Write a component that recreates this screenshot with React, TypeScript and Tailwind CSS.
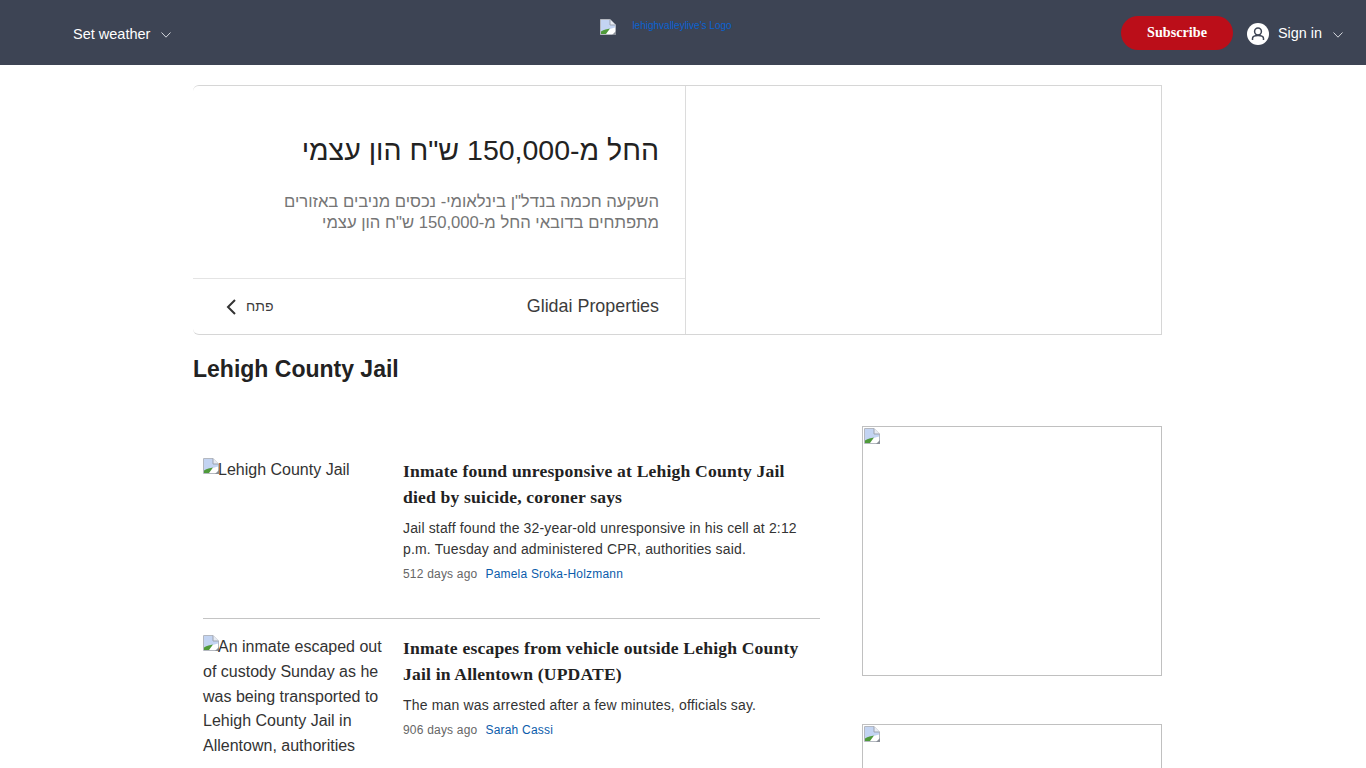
import React from 'react';

const sans = { fontFamily: '"Liberation Sans", Arial, sans-serif' };

// chrome's broken image placeholder
const BrokenImage = () => (
  <svg width="16" height="16" viewBox="0 0 16 16" className="inline-block shrink-0 align-top">
    <path d="M.5 .5H10L15.5 6V15.5H.5Z" fill="#fff" stroke="#b4b8c0" />
    <path d="M1 1H10V6H15V8.5L8 10.5L1 13.5Z" fill="#c3d4f2" />
    <path d="M10 .5V6H15.5" fill="#e8ecf4" stroke="#9ca3af" />
    <path d="M1 15V12.5C4 10.5 7 10 10 9.5L6 15Z" fill="#4f9a3a" />
    <path d="M9 15L15 9.5V11L11 15Z" fill="#ffffff" />
    <path d="M12 16L16 12V16Z" fill="#8a8f98" />
  </svg>
);

const Chevron = ({ className }: { className: string }) => (
  <svg viewBox="0 0 12 8" fill="none" stroke="currentColor" strokeWidth="1" className={className}>
    <path d="M1.5 1.5L6 6.2L10.5 1.5" />
  </svg>
);

const Header = () => (
  <header className="flex h-[65px] items-start bg-[#3d4454] text-white">
    <div className="ml-[73px] mt-[25px] flex items-center text-[14.5px] leading-[18px]" style={sans}>
      Set weather
      <Chevron className="ml-[10px] mt-[2px] h-2 w-3 text-[#d5d8de]" />
    </div>
    <div className="ml-[428px] mt-[19px] flex items-start">
      <BrokenImage />
      <span className="ml-4 text-[10px] leading-[14px] text-[#0b62d0]" style={sans}>lehighvalleylive's Logo</span>
    </div>
    <button className="ml-auto mt-4 h-[34px] w-28 rounded-full bg-[#bb0e19] text-[14.2px] font-bold text-white" style={{ fontFamily: '"Liberation Serif", serif' }}>
      Subscribe
    </button>
    <div className="ml-[14px] mr-[22px] mt-[20px] flex items-center text-[14.4px] leading-[22px]" style={sans}>
      <svg width="22" height="22" viewBox="0 0 22 22" className="mr-[9px] mt-[3px]">
        <circle cx="11" cy="11" r="11" fill="#fff" />
        <circle cx="11" cy="8.5" r="3.4" fill="none" stroke="#3d4454" strokeWidth="1.5" />
        <path d="M5.5 17V15.5C5.5 13.5 8 12.5 11 12.5S16.5 13.5 16.5 15.5V17" fill="none" stroke="#3d4454" strokeWidth="1.5" />
      </svg>
      Sign in
      <Chevron className="ml-[10px] mt-[4px] h-2 w-3 text-[#d5d8de]" />
    </div>
  </header>
);

const AdCard = () => (
  <div className="flex h-[250px] w-[969px] rounded-l-[6px] border border-l-0 border-[#d6d6d6]" style={sans}>
    <div className="flex w-[493px] flex-col border-r border-[#dcdcdc]" dir="rtl">
      <div className="flex h-[193px] flex-col border-b border-[#e4e4e4] pr-[26px]">
        <h2 className="mt-[47px] text-[28.5px] leading-[34px] text-[#222222]">החל מ-150,000 ש"ח הון עצמי</h2>
        <p className="mt-[24px] w-[400px] text-[16.65px] leading-[21px] text-[#757575]">
          השקעה חכמה בנדל"ן בינלאומי- נכסים מניבים באזורים מתפתחים בדובאי החל מ-150,000 ש"ח הון עצמי
        </p>
      </div>
      <div className="flex flex-1 items-center justify-between pl-[32px] pr-[26px]">
        <span className="text-[17.9px] text-[#3c3c3c]" dir="ltr">Glidai Properties</span>
        <span className="flex items-center text-[14px] text-[#3c3c3c]">
          פתח
          <svg width="12" height="18" viewBox="0 0 12 18" fill="none" stroke="#333333" strokeWidth="2" className="mr-[9px]">
            <path d="M10 2L3 9L10 16" />
          </svg>
        </span>
      </div>
    </div>
  </div>
);

type Article = {
  alt: string;
  title: string;
  desc: string;
  age: string;
  author: string;
};

const articles: Article[] = [
  {
    alt: 'Lehigh County Jail',
    title: 'Inmate found unresponsive at Lehigh County Jail died by suicide, coroner says',
    desc: 'Jail staff found the 32-year-old unresponsive in his cell at 2:12 p.m. Tuesday and administered CPR, authorities said.',
    age: '512 days ago',
    author: 'Pamela Sroka-Holzmann',
  },
  {
    alt: 'An inmate escaped out of custody Sunday as he was being transported to Lehigh County Jail in Allentown, authorities',
    title: 'Inmate escapes from vehicle outside Lehigh County Jail in Allentown (UPDATE)',
    desc: 'The man was arrested after a few minutes, officials say.',
    age: '906 days ago',
    author: 'Sarah Cassi',
  },
];

const ArticleRow = ({ item }: { item: Article }) => (
  <article className="flex h-[161px]">
    <div className="mt-[1px] w-[180px] shrink-0 text-base leading-[24.8px] text-[#333333]" style={sans}>
      <span className="-mr-[1px] inline-block align-top"><BrokenImage /></span>
      {item.alt}
    </div>
    <div className="ml-5 min-w-0 flex-1">
      <h3 className="mt-[1px] text-[17.6px] font-bold leading-[26px] tracking-[0.18px] text-[#222222]" style={{ fontFamily: '"Liberation Serif", serif' }}>
        {item.title}
      </h3>
      <p className="mt-[8px] text-sm leading-[21px] tracking-[0.16px] text-[#333333]" style={sans}>{item.desc}</p>
      <div className="mt-[5px] flex gap-2 text-xs leading-[18px] tracking-[0.2px]" style={sans}>
        <span className="text-[#666666]">{item.age}</span>
        <span className="text-[#0b5cab]">{item.author}</span>
      </div>
    </div>
  </article>
);

export default function App() {
  return (
    <div className="h-[768px] overflow-hidden bg-white">
      <Header />
      <main className="ml-[193px] w-[969px] pt-5">
        <AdCard />
        <h1 className="mt-[20px] text-[23px] font-bold leading-7 text-[#222222]" style={sans}>Lehigh County Jail</h1>
        <div className="mt-[43px] flex items-start">
          <div className="ml-[10px] mt-[31px] w-[617px]">
            <ArticleRow item={articles[0]} />
            <div className="border-t border-[#c4c4c4] pt-[15px]">
              <ArticleRow item={articles[1]} />
            </div>
          </div>
          <aside className="ml-[42px] flex w-[300px] flex-col gap-12">
            <div className="h-[250px] border border-[#c0c0c0] p-[1px]"><BrokenImage /></div>
            <div className="h-[250px] border border-[#c0c0c0] p-[1px]"><BrokenImage /></div>
          </aside>
        </div>
      </main>
    </div>
  );
}
